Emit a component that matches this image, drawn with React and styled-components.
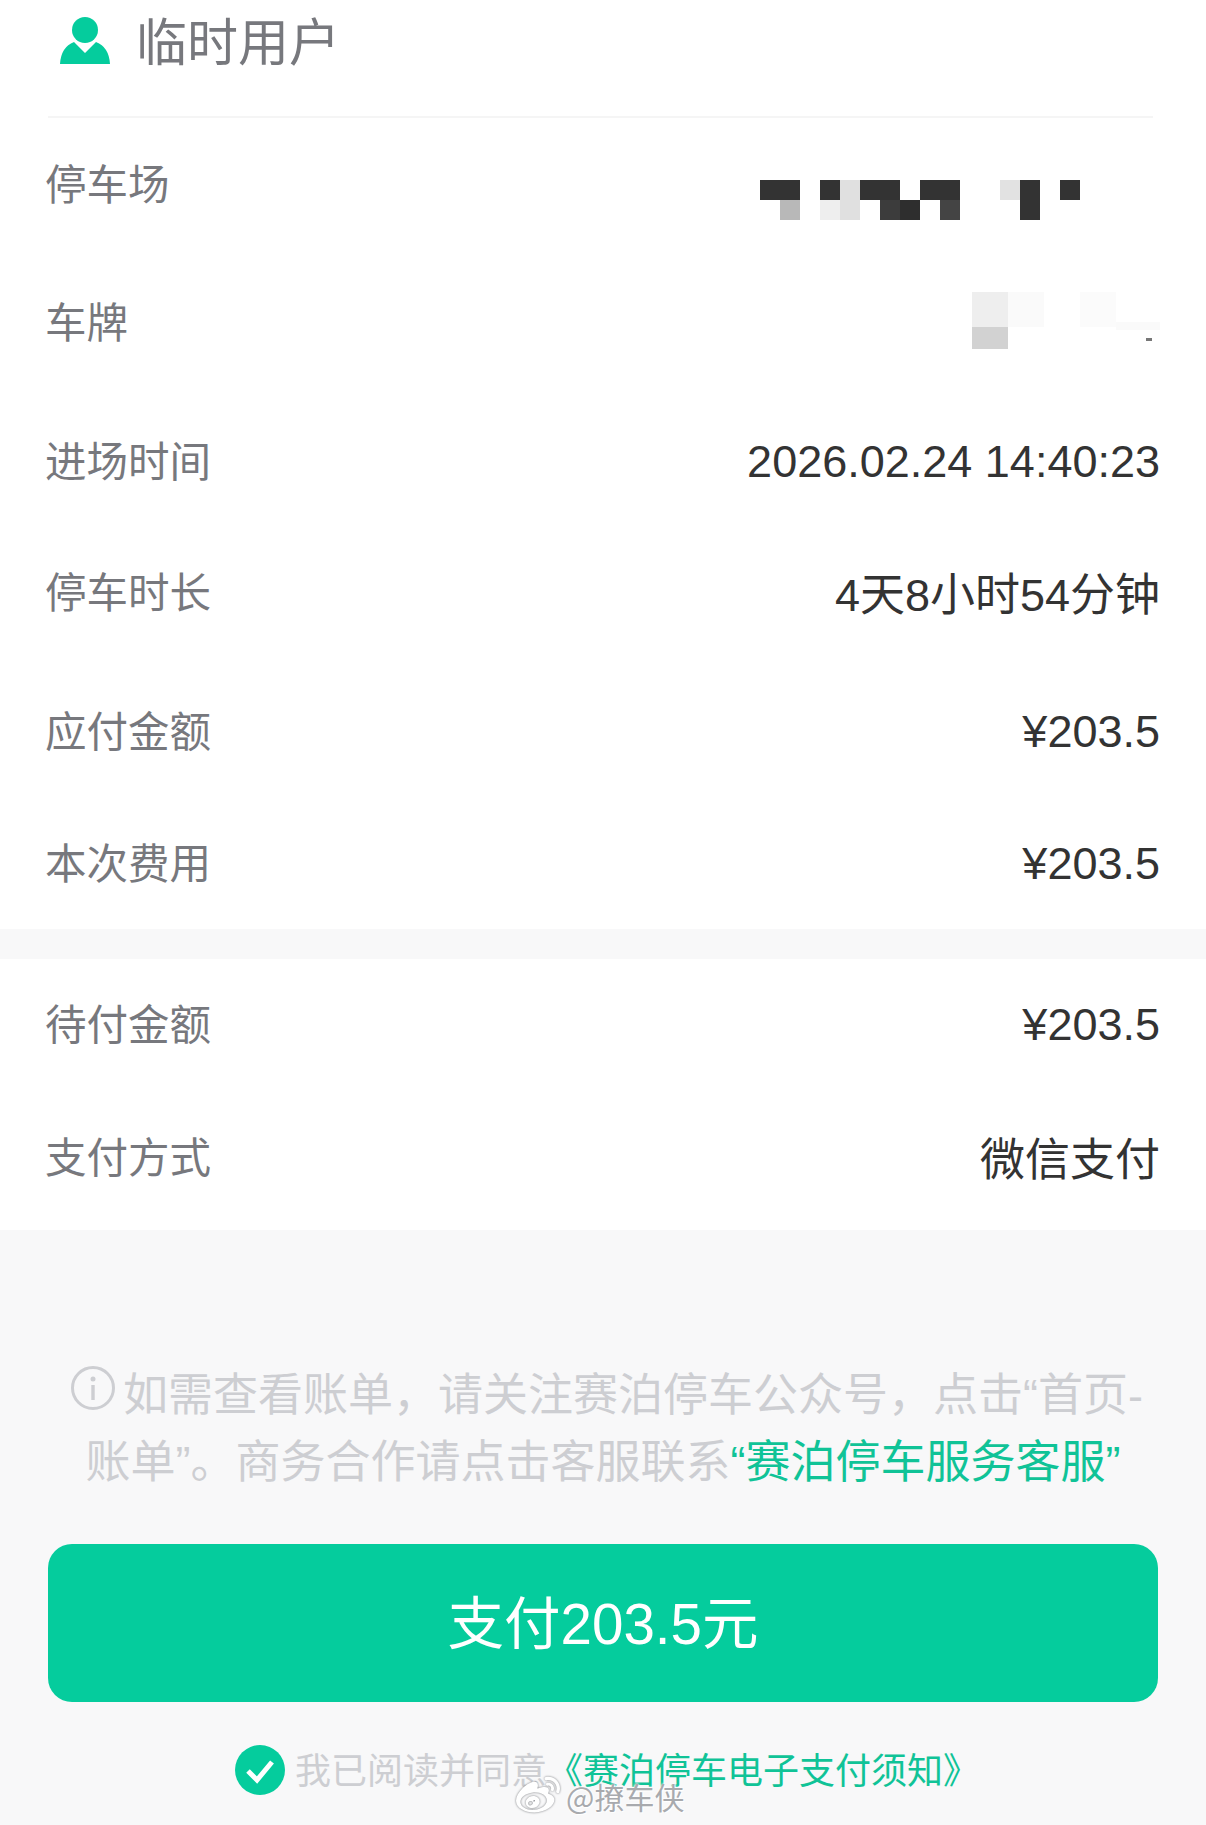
import React from 'react';
import styled, { createGlobalStyle } from 'styled-components';
import { FaWeibo } from 'react-icons/fa';

const GREEN = '#05cc9d';
const CJK = '"Noto Sans CJK SC", "Noto Sans", sans-serif';

const GlobalStyle = createGlobalStyle`
  html, body {
    margin: 0;
    padding: 0;
    background: #f8f8f9;
    font-family: ${CJK};
  }
`;

const Page = styled.div`
  position: relative;
  width: 1206px;
  height: 1825px;
  overflow: hidden;
  background: #f8f8f9;
`;

const Section = styled.section`
  background: #fff;
  padding-bottom: ${p => p.$bottom}px;
  margin-bottom: ${p => p.$gap || 0}px;
`;

const Header = styled.div`
  display: flex;
  align-items: center;
  gap: 26px;
  height: 82px;
  margin: 0 53px 0 48px;
  padding: 0 0 34px 12px;
  border-bottom: 2px solid #f5f5f5;
`;

const HeaderTitle = styled.span`
  font-size: 51px;
  line-height: 1;
  padding-bottom: 3px;
  color: #77787d;
`;

const Row = styled.div`
  display: flex;
  align-items: center;
  justify-content: space-between;
  height: ${p => p.$h}px;
  padding: 0 46px 0 45px;
`;

const Label = styled.span`
  font-size: 41.5px;
  color: #77787d;
`;

const Value = styled.span`
  font-family: "Liberation Sans", ${CJK};
  font-size: 45px;
  padding-top: ${p => p.$top}px;
  color: #333;
`;

const Mosaic = styled.svg`
  display: block;
  margin-right: ${p => p.$right}px;
  margin-top: ${p => p.$top}px;
`;

const Notice = styled.div`
  width: 1110px;
  margin: 132px 0 0 48px;
  height: 182px;
  font-family: "Liberation Sans", ${CJK};
  font-size: 45px;
  line-height: 67px;
  color: #cdced2;
  text-align: center;
`;

const InfoIcon = styled.svg`
  vertical-align: 1px;
  margin: 0 8px 0 8px;
`;

const Link = styled.span`
  color: #10c397;
`;

const PayButton = styled.button`
  display: block;
  width: 1110px;
  height: 158px;
  margin: 0 0 0 48px;
  padding: 0 0 8px;
  border: 0;
  border-radius: 24px;
  background: ${GREEN};
  color: #fff;
  font-family: "Liberation Sans", ${CJK};
  font-size: 56.5px;
`;

const Agreement = styled.div`
  display: flex;
  align-items: center;
  margin: 40px 0 0 235px;
  font-size: 36px;
  color: #cdced2;
`;

const AgreementText = styled.span`
  padding-bottom: 4px;
`;

const CheckIcon = styled.svg`
  margin-right: 10px;
  flex: none;
`;

const Watermark = styled.div`
  position: absolute;
  left: 516px;
  top: 1774px;
  display: flex;
  align-items: center;
  gap: 6px;
  font-size: 30px;
  line-height: 44px;
  color: #a8aaae;
  text-shadow: 0 0 2px #fff, 0 0 3px #fff, 1px 1px 1px #fff;

  svg {
    color: #fff;
    filter: drop-shadow(0 0 1px #77797d);
  }
`;

// 打码区域，每格 [x, y, w, h, 颜色]
const PARK_CELLS = [
  [0, 0, 40, 20, '#333'],
  [20, 20, 20, 20, '#b8b8b8'],
  [60, 0, 20, 20, '#333'],
  [80, 0, 20, 20, '#e0e0e0'],
  [60, 20, 20, 20, '#eee'],
  [80, 20, 20, 20, '#e0e0e0'],
  [100, 0, 40, 20, '#333'],
  [120, 20, 20, 20, '#3c3c3c'],
  [140, 20, 20, 20, '#2e2e2e'],
  [160, 0, 40, 20, '#333'],
  [180, 20, 20, 20, '#444'],
  [240, 0, 20, 20, '#e2e2e2'],
  [260, 0, 20, 40, '#333'],
  [300, 0, 20, 20, '#333'],
];

const PLATE_CELLS = [
  [0, 0, 36, 35, '#eee'],
  [0, 35, 36, 22, '#d2d2d2'],
  [36, 0, 36, 35, '#fafafa'],
  [108, 0, 36, 35, '#fbfbfb'],
  [144, 30, 44, 8, '#fafafa'],
  [174, 46, 6, 3, '#777'],
];

const MosaicBlock = ({ cells, width, height, right, top }) => (
  <Mosaic width={width} height={height} $right={right} $top={top}>
    {cells.map(([x, y, w, h, fill]) => (
      <rect key={`${x}-${y}`} x={x} y={y} width={w} height={h} fill={fill} />
    ))}
  </Mosaic>
);

const FIRST_ROWS = [
  { h: 130, label: '进场时间', value: '2026.02.24 14:40:23', top: 6 },
  { h: 132, label: '停车时长', value: '4天8小时54分钟', top: 2 },
  { h: 146, label: '应付金额', value: '¥203.5', top: 6 },
  { h: 118, label: '本次费用', value: '¥203.5', top: 6 },
];

const SECOND_ROWS = [
  { h: 126, label: '待付金额', value: '¥203.5', top: 6 },
  { h: 140, label: '支付方式', value: '微信支付', top: 2 },
];

export default function App() {
  return (
    <Page>
      <GlobalStyle />
      <Section $bottom={9} $gap={30}>
        <Header>
          <svg width="50" height="48" viewBox="0 0 50 48">
            <ellipse cx="25" cy="13" rx="13" ry="13" fill={GREEN} />
            <path d="M14 25 L25 36 L36 25 Q49 30 50 47 L0 47 Q1 30 14 25 Z" fill={GREEN} />
          </svg>
          <HeaderTitle>临时用户</HeaderTitle>
        </Header>
        <Row $h={128}>
          <Label>停车场</Label>
          <MosaicBlock cells={PARK_CELLS} width={320} height={40} right={80} top={36} />
        </Row>
        <Row $h={148}>
          <Label>车牌</Label>
          <MosaicBlock cells={PLATE_CELLS} width={188} height={57} right={0} top={0} />
        </Row>
        {FIRST_ROWS.map(row => (
          <Row key={row.label} $h={row.h}>
            <Label>{row.label}</Label>
            <Value $top={row.top}>{row.value}</Value>
          </Row>
        ))}
      </Section>
      <Section $bottom={5}>
        {SECOND_ROWS.map(row => (
          <Row key={row.label} $h={row.h}>
            <Label>{row.label}</Label>
            <Value $top={row.top}>{row.value}</Value>
          </Row>
        ))}
      </Section>
      <Notice>
        <InfoIcon width="44" height="44" viewBox="0 0 44 44">
          <circle cx="22" cy="22" r="20.5" fill="none" stroke="#cdced2" strokeWidth="3" />
          <circle cx="22" cy="13" r="2.5" fill="#cdced2" />
          <rect x="20.3" y="19" width="3.4" height="15" fill="#cdced2" />
        </InfoIcon>
        如需查看账单，请关注赛泊停车公众号，点击“首页-
        <br />
        账单”。商务合作请点击客服联系<Link>“赛泊停车服务客服”</Link>
      </Notice>
      <PayButton>支付203.5元</PayButton>
      <Agreement>
        <CheckIcon width="50" height="50" viewBox="0 0 50 50">
          <circle cx="25" cy="25" r="25" fill={GREEN} />
          <path d="M13 26 L22 35 L37 17" fill="none" stroke="#fff" strokeWidth="5" />
        </CheckIcon>
        <AgreementText>
          我已阅读并同意<Link>《赛泊停车电子支付须知》</Link>
        </AgreementText>
      </Agreement>
      <Watermark>
        <FaWeibo size={44} />
        @撩车侠
      </Watermark>
    </Page>
  );
}
